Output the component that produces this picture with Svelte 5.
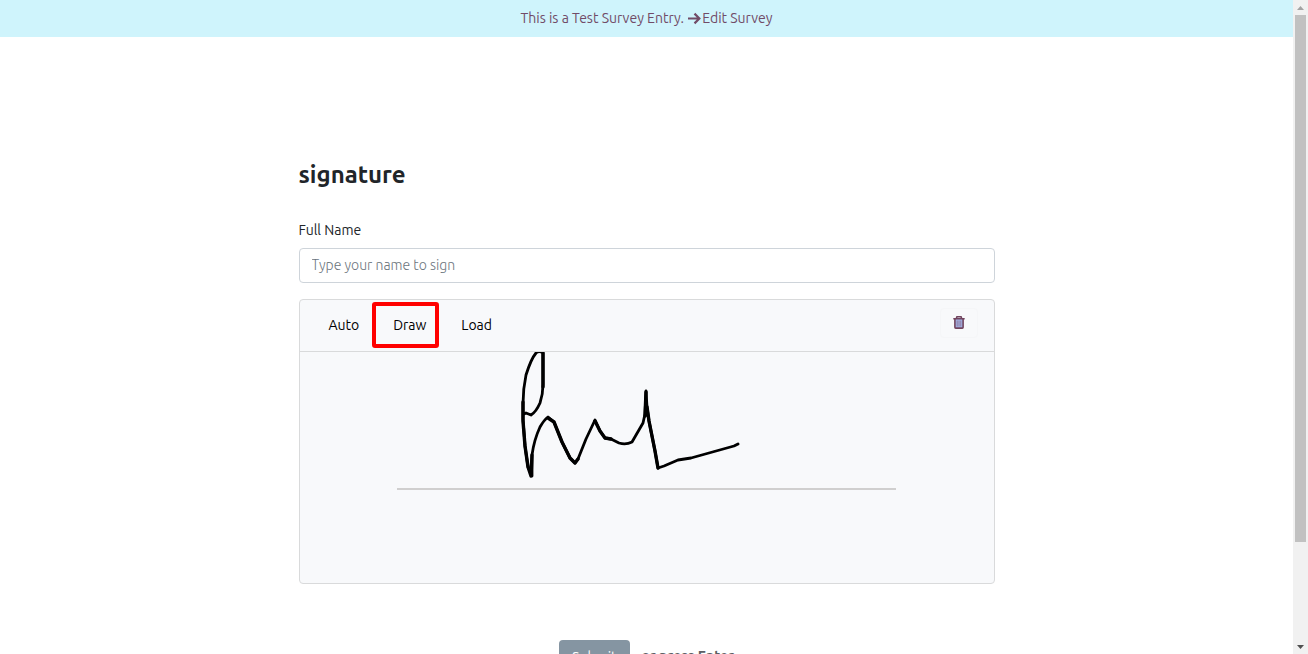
<script>
  let name = $state('');
  const modes = ['Auto', 'Draw', 'Load'];
</script>

<div class="window">
  <div class="page">
    <header class="banner">
      <a href="#edit">This is a Test Survey Entry. <svg class="arrow" viewBox="0 0 12 12" aria-hidden="true"><path d="M0 6H10M6 1.5L10.5 6L6 10.5" /></svg>Edit Survey</a>
    </header>

    <main>
      <h1>signature</h1>
      <label for="full-name">Full Name</label>
      <input id="full-name" type="text" placeholder="Type your name to sign" bind:value={name} />

      <section class="card">
        <div class="toolbar">
          {#each modes as mode}
            <button type="button" class="mode" class:marked={mode === 'Draw'}>{mode}</button>
          {/each}
          <button type="button" class="clear" aria-label="Clear signature">
            <svg viewBox="0 0 12 13" aria-hidden="true">
              <path fill="#a3b4e8" d="M2 3h8v9H2z" />
              <path fill="none" stroke="#71445f" stroke-width="1.6" d="M0.3 2.7H11.7M3.6 2.5V1.6Q3.6 0.7 4.5 0.7H7.5Q8.4 0.7 8.4 1.6V2.5M1.9 3V11.3Q1.9 12.1 2.7 12.1H9.3Q10.1 12.1 10.1 11.3V3" />
              <path fill="none" stroke="#8c6e91" stroke-width="0.8" d="M4.2 4.5V10.5M6 4.5V10.5M7.8 4.5V10.5" />
            </svg>
          </button>
        </div>
        <svg class="pad" viewBox="0 0 694 231" role="img" aria-label="Drawn signature">
          <path class="baseline" d="M97 137H596" />
          <path class="ink" d="M224 62L226 61L231 63Q236 60 240 51Q243 42 243 32V1Q239 -2 236 1Q231 7 226 23Q223 37 223 52V67L225 94L228 115L232 124V103Q234 88 240 75Q244 68 248 65L254 70L262 90L270 106L275 111L278 107L286 87L295 68L300 79L305 86L311 87L319 91Q326 93 332 90L343 71L345 62L346 39L347 55L349 69L352 84L355 99L358 116L364 114L378 108L391 106L434 94L438 92" />
          <path class="heavy" d="M243 1V35M223 50V69L225 94L228 115L231 124L232 103M248 66L254 70L262 90L270 106L275 111L278 107M295 69L300 79L305 86L311 87M346 40L345 64M347 55L349 69L352 84L355 99L358 116" />
        </svg>
      </section>

      <div class="actions">
        <button type="submit" class="submit">Submit</button>
        <span>or press Enter</span>
      </div>
    </main>
  </div>

  <div class="scrollbar" aria-hidden="true">
    <svg viewBox="0 0 15 15"><path fill="#a3a3a3" d="M7.5 6L11 10H4z" /></svg>
    <div class="track"><div class="thumb"></div></div>
    <svg viewBox="0 0 15 15"><path fill="#505050" d="M7.5 10L11 6H4z" /></svg>
  </div>
</div>

<style>
  :global(body) {
    margin: 0;
    background: #fff;
  }
  .window {
    display: flex;
    height: 100vh;
    overflow: hidden;
    font: 14px/21px Ubuntu, 'Noto Sans', sans-serif;
    color: #212529;
  }
  .page {
    flex: 1;
    min-width: 0;
  }
  .banner {
    padding: 8px;
    background: #cff4fc;
    text-align: center;
  }
  .banner a {
    color: #714b67;
    text-decoration: none;
  }
  .arrow {
    width: 13px;
    height: 13px;
    margin: 0 1px;
    vertical-align: -2px;
    fill: none;
    stroke: #714b67;
    stroke-width: 2;
  }
  main {
    box-sizing: border-box;
    max-width: 720px;
    margin: 0 auto;
    padding: 123px 12px 0;
  }
  h1 {
    margin: 0 0 30px;
    font-size: 24px;
    line-height: 30px;
    font-weight: 600;
  }
  label {
    display: block;
    margin-bottom: 7px;
  }
  #full-name {
    box-sizing: border-box;
    display: block;
    width: 100%;
    height: 35px;
    padding: 5px 12px 7px;
    border: 1px solid #ced4da;
    border-radius: 4px;
    background: #fff;
    color: #495057;
    font: inherit;
    font-weight: 300;
  }
  #full-name::placeholder {
    color: #6c757d;
    opacity: 1;
  }
  .card {
    margin-top: 16px;
    border: 1px solid #d9dadb;
    border-radius: 4px;
    background: #f8f9fb;
    overflow: hidden;
  }
  .toolbar {
    display: flex;
    align-items: center;
    height: 51px;
    padding: 0 16px;
    border-bottom: 1px solid #d9dadb;
  }
  button {
    font: inherit;
    cursor: pointer;
  }
  .mode {
    height: 46px;
    padding: 0 13px;
    border: 0;
    background: none;
    color: #000;
  }
  .marked {
    width: 67px;
    margin: 0 9px 2px 0;
    padding: 2px 8px 0 16px;
    border: 4px solid #f00;
    border-radius: 3px;
  }
  .clear {
    display: flex;
    align-items: center;
    justify-content: center;
    width: 38px;
    height: 30px;
    margin: 0 0 6px auto;
    padding: 0;
    border: 1px solid #f5f6f8;
    border-radius: 4px;
    background: #f8f9fb;
  }
  .clear svg {
    width: 12px;
    height: 13px;
  }
  .pad {
    display: block;
    width: 100%;
    aspect-ratio: 694 / 231;
  }
  .pad path {
    fill: none;
    stroke: #000;
    stroke-linecap: round;
    stroke-linejoin: round;
  }
  .pad .ink {
    stroke-width: 2.8;
  }
  .pad .heavy {
    stroke-width: 3.4;
  }
  .pad .baseline {
    stroke: #d0cfcf;
    stroke-width: 2;
    stroke-linecap: butt;
  }
  .actions {
    display: flex;
    align-items: center;
    justify-content: center;
    gap: 12px;
    margin-top: 56px;
  }
  .submit {
    height: 35px;
    padding: 0 13px;
    border: 0;
    border-radius: 4px;
    background: #8595a2;
    color: #fff;
  }
  .actions span {
    padding-bottom: 3px;
    color: #5c6064;
    font-weight: 700;
  }
  .scrollbar {
    display: flex;
    flex-direction: column;
    width: 15px;
    background: #f1f1f1;
  }
  .scrollbar svg {
    width: 15px;
    height: 15px;
  }
  .track {
    flex: 1;
    padding: 0 2px;
  }
  .thumb {
    height: 84.5%;
    background: #c1c1c1;
  }
</style>
